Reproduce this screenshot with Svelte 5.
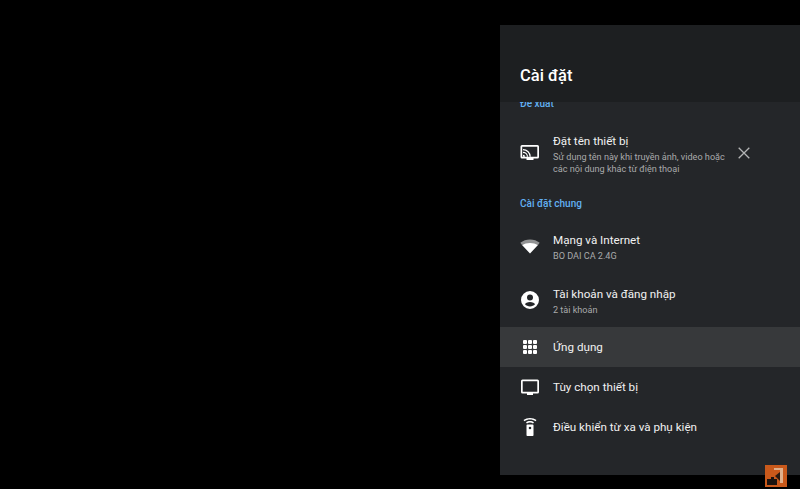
<script lang="ts">
  const general = [
    { icon: "wifi", title: "Mạng và Internet", sub: "BO DAI CA 2.4G", h: 54 },
    { icon: "account", title: "Tài khoản và đăng nhập", sub: "2 tài khoản", h: 54 },
    { icon: "apps", title: "Ứng dụng", active: true, h: 40 },
    { icon: "tv", title: "Tùy chọn thiết bị", h: 40 },
    { icon: "remote", title: "Điều khiển từ xa và phụ kiện", h: 40 }
  ];
</script>

{#snippet icon(name)}
  <svg class="icon" viewBox="0 0 20 20" width="20" height="20" fill="#fff">
    {#if name === "cast"}
      <path fill-rule="evenodd" d="M2 3h15.500A1.500 1.500 0 0 1 19 4.500v10.500a1.500 1.500 0 0 1-1.500 1.500H13.500V18h-7v-1.500H2A1.500 1.500 0 0 1 .5 15V4.500A1.500 1.500 0 0 1 2 3zm.2 1.700v10.100h15.100V4.700z"/>
      <path d="M3 12.700a2.100 2.100 0 0 1 2.100 2.100H3zM3 9.700a5.100 5.100 0 0 1 5.100 5.100H6.900A3.900 3.900 0 0 0 3 10.900zM3 7a7.800 7.800 0 0 1 7.800 7.800H9.600A6.600 6.600 0 0 0 3 8.200z"/>
    {:else if name === "wifi"}
      <path d="M0.300 6.800C3 4.700 6.300 3.500 10 3.500s7 1.200 9.700 3.300L17.800 9.200H2.200z" opacity="0.5"/>
      <path d="M2.200 9.200C4.300 7.800 7 7 10 7s5.700.8 7.800 2.200L10 17.500z"/>
    {:else if name === "account"}
      <path fill-rule="evenodd" d="M10 1a9 9 0 1 1 0 18 9 9 0 0 1 0-18zm0 3.500a3 3 0 1 0 0 6 3 3 0 0 0 0-6zM10 12c-2.600 0-4.800 1-5 2.300 1.200 1.300 3 2.200 5 2.200s3.800-.9 5-2.200C14.800 13 12.600 12 10 12z"/>
    {:else if name === "apps"}
      {#each [3, 8, 13] as y}
        {#each [3, 8, 13] as x}
          <rect {x} {y} width="4" height="4" rx="1"/>
        {/each}
      {/each}
    {:else if name === "tv"}
      <path fill-rule="evenodd" d="M2.500 2.500h15A1.500 1.500 0 0 1 19 4v11a1.500 1.500 0 0 1-1.500 1.500H13V18H7v-1.500H2.500A1.500 1.500 0 0 1 1 15V4a1.500 1.500 0 0 1 1.500-1.500zM2.700 4.200v10.600h14.600V4.200z"/>
    {:else if name === "remote"}
      <path fill-rule="evenodd" d="M7.300 7.500h5.400a.8.800 0 0 1 .8.800v10a.8.800 0 0 1-.8.700H7.300a.8.800 0 0 1-.8-.7v-10a.8.800 0 0 1 .8-.8zM10 9.700a1.300 1.300 0 1 0 0 2.600 1.300 1.300 0 0 0 0-2.600z"/>
      <path d="M3.500 3C5.300 1.700 7.500 1 10 1s4.700.7 6.500 2l-1 1.200C14 3.100 12.100 2.500 10 2.500S6 3.100 4.500 4.200zM6 5.400C7.100 4.500 8.500 4 10 4s2.900.5 4 1.400l-1 1.100C12.200 5.900 11.100 5.500 10 5.500s-2.200.4-3 1z"/>
    {/if}
  </svg>
{/snippet}

<div class="screen">
  <aside class="panel">
    <header class="head"><h1>Cài đặt</h1></header>
    <div class="list">
      <h2 class="section first">Đề xuất</h2>
      <div class="row suggest">
        {@render icon("cast")}
        <div class="text">
          <div class="title">Đặt tên thiết bị</div>
          <div class="sub">Sử dụng tên này khi truyền ảnh, video hoặc<br />các nội dung khác từ điện thoại</div>
        </div>
        <svg class="close" viewBox="0 0 12 12" width="12" height="12" fill="none" stroke="#b4b5b6" stroke-width="1.300">
          <path d="M.7.7l10.600 10.600M11.300.7L.7 11.300" />
        </svg>
      </div>
      <h2 class="section">Cài đặt chung</h2>
      {#each general as item}
        <div class="row" class:active={item.active} style="height: {item.h}px">
          {@render icon(item.icon)}
          <div class="text" class:two={item.sub}>
            <div class="title">{item.title}</div>
            {#if item.sub}<div class="sub">{item.sub}</div>{/if}
          </div>
        </div>
      {/each}
    </div>
  </aside>
  <div class="badge">
    <svg viewBox="0 0 22 22" width="22" height="22">
      <rect x="9" y="3" width="9" height="2" fill="#e0b08c" />
      <rect x="15" y="3" width="3" height="15" fill="#e0b08c" />
      <path d="M10 11l5-4v9z" fill="#2a1a10" />
      <rect x="2" y="14" width="10" height="6" fill="#1c1410" />
      <rect x="6" y="12" width="3" height="3" fill="#1c1410" />
    </svg>
  </div>
</div>

<style>
  :global(body) {
    margin: 0;
    background: #000;
  }

  .screen {
    position: relative;
    display: flex;
    justify-content: flex-end;
    height: 489px;
    padding-top: 25px;
    box-sizing: border-box;
    overflow: hidden;
    background: #000;
    font-family: Roboto, "Noto Sans", sans-serif;
  }

  .panel {
    display: flex;
    flex-direction: column;
    width: 300px;
    height: 450px;
    background: #242629;
  }

  .head {
    flex: none;
    height: 77px;
    padding: 0 20px;
    box-sizing: border-box;
    background: #1d1f21;
  }

  h1 {
    margin: 0;
    padding-top: 41px;
    font-size: 16.500px;
    line-height: 20px;
    font-weight: 500;
    color: #fff;
  }

  .list {
    flex: 1;
    overflow: hidden;
  }

  .section {
    margin: 0;
    padding: 0 20px;
    font-size: 10px;
    line-height: 14px;
    font-weight: 500;
    color: #62b0f2;
  }

  .section.first {
    margin-top: -5px;
    margin-bottom: 18px;
  }

  .section:not(.first) {
    margin-top: 18px;
    margin-bottom: 8px;
  }

  .row {
    display: flex;
    align-items: center;
    gap: 13px;
    padding: 0 20px;
  }

  .row.suggest {
    height: 50px;
  }

  .row.suggest .icon {
    margin-bottom: 4px;
  }

  .row.active {
    background: #37393b;
  }

  .icon {
    flex: none;
  }

  .text {
    flex: 1;
    min-width: 0;
  }

  .text.two {
    padding-top: 2px;
  }

  .title {
    font-size: 11.650px;
    line-height: 17px;
    color: #f1f1f1;
  }

  .sub {
    margin-top: 1px;
    font-size: 9.100px;
    line-height: 12px;
    color: #a9aaab;
  }

  .close {
    flex: none;
    margin: 0 30px 2px 0;
  }

  .badge {
    position: absolute;
    left: 765px;
    top: 465px;
    width: 22px;
    height: 22px;
    background: #c9591b;
  }
</style>
